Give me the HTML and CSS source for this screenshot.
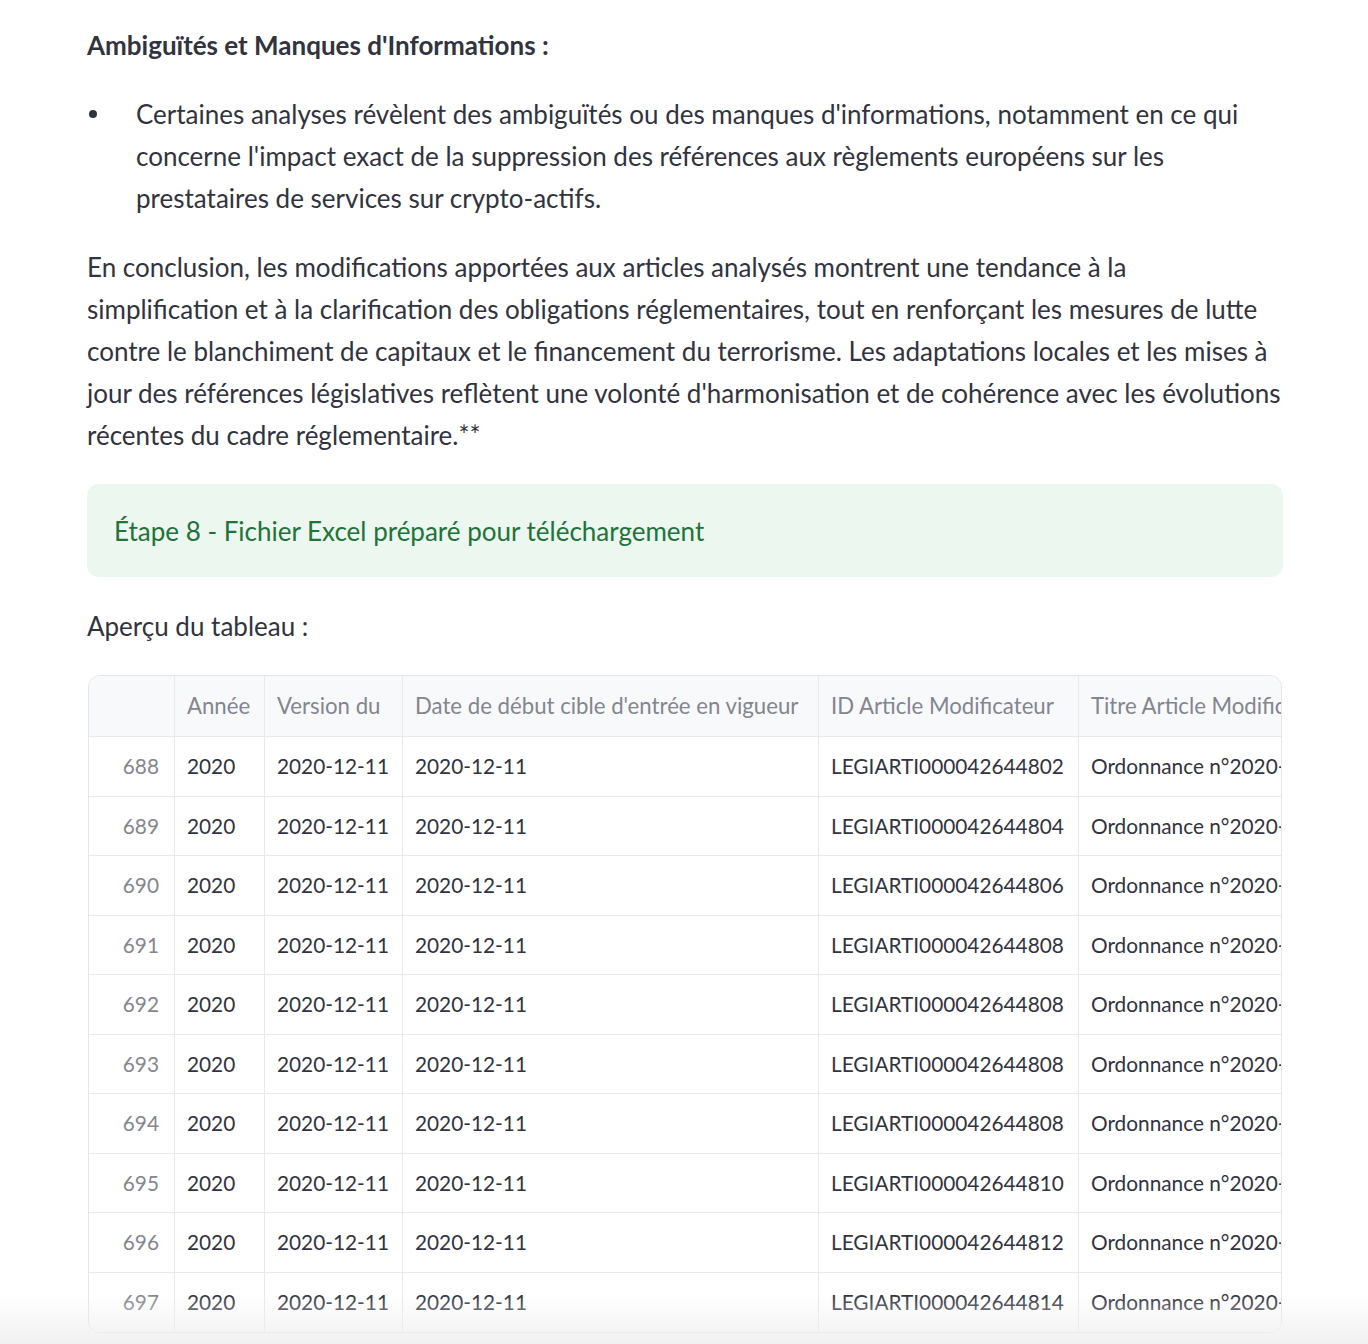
FILE: index.html
```html
<!DOCTYPE html>
<html lang="fr">
<head>
<meta charset="utf-8">
<title>Analyse</title>
<link rel="stylesheet" href="styles.css">
</head>
<body>
<main class="main">
  <p class="heading"><strong>Ambiguïtés et Manques d'Informations :</strong></p>
  <ul class="list">
    <li>Certaines analyses révèlent des ambiguïtés ou des manques d'informations, notamment en ce qui concerne l'impact exact de la suppression des références aux règlements européens sur les prestataires de services sur crypto-actifs.</li>
  </ul>
  <p class="para">En conclusion, les modifications apportées aux articles analysés montrent une tendance à la simplification et à la clarification des obligations réglementaires, tout en renforçant les mesures de lutte contre le blanchiment de capitaux et le financement du terrorisme. Les adaptations locales et les mises à jour des références législatives reflètent une volonté d'harmonisation et de cohérence avec les évolutions récentes du cadre réglementaire.**</p>
  <div class="alert">Étape 8 - Fichier Excel préparé pour téléchargement</div>
  <p class="para">Aperçu du tableau :</p>
  <div class="table-wrap">
    <div class="grid">
      <div class="hcell"></div>
      <div class="hcell">Année</div>
      <div class="hcell">Version du</div>
      <div class="hcell">Date de début cible d'entrée en vigueur</div>
      <div class="hcell">ID Article Modificateur</div>
      <div class="hcell">Titre Article Modificateur</div>

      <div class="cell idx">688</div><div class="cell">2020</div><div class="cell">2020-12-11</div><div class="cell">2020-12-11</div><div class="cell">LEGIARTI000042644802</div><div class="cell">Ordonnance n°2020-1544</div>
      <div class="cell idx">689</div><div class="cell">2020</div><div class="cell">2020-12-11</div><div class="cell">2020-12-11</div><div class="cell">LEGIARTI000042644804</div><div class="cell">Ordonnance n°2020-1544</div>
      <div class="cell idx">690</div><div class="cell">2020</div><div class="cell">2020-12-11</div><div class="cell">2020-12-11</div><div class="cell">LEGIARTI000042644806</div><div class="cell">Ordonnance n°2020-1544</div>
      <div class="cell idx">691</div><div class="cell">2020</div><div class="cell">2020-12-11</div><div class="cell">2020-12-11</div><div class="cell">LEGIARTI000042644808</div><div class="cell">Ordonnance n°2020-1544</div>
      <div class="cell idx">692</div><div class="cell">2020</div><div class="cell">2020-12-11</div><div class="cell">2020-12-11</div><div class="cell">LEGIARTI000042644808</div><div class="cell">Ordonnance n°2020-1544</div>
      <div class="cell idx">693</div><div class="cell">2020</div><div class="cell">2020-12-11</div><div class="cell">2020-12-11</div><div class="cell">LEGIARTI000042644808</div><div class="cell">Ordonnance n°2020-1544</div>
      <div class="cell idx">694</div><div class="cell">2020</div><div class="cell">2020-12-11</div><div class="cell">2020-12-11</div><div class="cell">LEGIARTI000042644808</div><div class="cell">Ordonnance n°2020-1544</div>
      <div class="cell idx">695</div><div class="cell">2020</div><div class="cell">2020-12-11</div><div class="cell">2020-12-11</div><div class="cell">LEGIARTI000042644810</div><div class="cell">Ordonnance n°2020-1544</div>
      <div class="cell idx">696</div><div class="cell">2020</div><div class="cell">2020-12-11</div><div class="cell">2020-12-11</div><div class="cell">LEGIARTI000042644812</div><div class="cell">Ordonnance n°2020-1544</div>
      <div class="cell idx">697</div><div class="cell">2020</div><div class="cell">2020-12-11</div><div class="cell">2020-12-11</div><div class="cell">LEGIARTI000042644814</div><div class="cell">Ordonnance n°2020-1544</div>
    </div>
  </div>
</main>
<div class="bottom-fade"></div>
</body>
</html>
```
FILE: styles.css
```css
html, body {
  margin: 0;
  padding: 0;
  background: #ffffff;
}
body {
  font-family: "Lato", "Noto Sans", sans-serif;
  color: #31333f;
  font-size: 26px;
  line-height: 42px;
}
.main {
  padding: 24px 85px 0 87px;
}
.heading {
  margin: 0 0 27px;
}
.heading strong {
  font-weight: 700;
}
.list {
  margin: 0 0 27px;
  padding: 0 0 0 49px;
  list-style: none;
}
.list li {
  position: relative;
}
.list li::before {
  content: "";
  position: absolute;
  left: -47px;
  top: 17px;
  width: 8px;
  height: 8px;
  border-radius: 50%;
  background: #31333f;
}
.para {
  margin: 0 0 28px;
}
.alert {
  height: 93px;
  box-sizing: border-box;
  padding: 0 27px;
  display: flex;
  align-items: center;
  background: #ecf8ef;
  color: #21733a;
  border-radius: 12px;
  margin-bottom: 28px;
}
.table-wrap {
  margin: 0 1px;
  border: 1px solid #e4e5e8;
  border-radius: 12px;
  overflow: hidden;
  box-sizing: border-box;
}
.grid {
  display: grid;
  grid-template-columns: 86px 90px 138px 416px 260px 420px;
  grid-template-rows: 61px repeat(10, 59.5px);
  font-size: 20.8px;
  line-height: 26px;
  width: max-content;
}
.hcell, .cell {
  box-sizing: border-box;
  border-right: 1px solid #e8e9ec;
  border-bottom: 1px solid #e8e9ec;
  padding: 0 12px;
  display: flex;
  align-items: center;
  white-space: nowrap;
  overflow: hidden;
}
.hcell {
  background: #f8f9fb;
  color: #83858f;
  font-size: 22.2px;
}
.cell {
  background: #ffffff;
  color: #31333f;
}
.cell.idx {
  justify-content: flex-end;
  padding-right: 15px;
  color: #85868d;
}
.grid > :nth-last-child(-n+6) {
  border-bottom: none;
}
.bottom-fade {
  position: fixed;
  left: 0;
  right: 0;
  bottom: 0;
  height: 50px;
  background: linear-gradient(to bottom, rgba(255,255,255,0) 0%, rgba(239,239,240,0.9) 100%);
  pointer-events: none;
}
```
